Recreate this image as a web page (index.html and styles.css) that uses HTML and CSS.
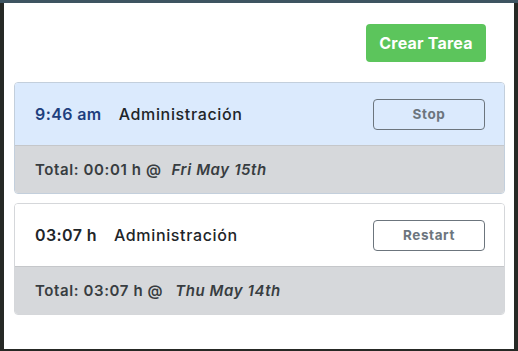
FILE: index.html
```html
<!DOCTYPE html>
<html lang="es">
<head>
<meta charset="utf-8">
<link rel="stylesheet" href="styles.css">
</head>
<body>
<div class="popup">
  <div class="toolbar">
    <button class="btn-create">Crear Tarea</button>
  </div>
  <div class="card card-active">
    <div class="card-head">
      <span class="time time-active">9:46 am</span>
      <span class="task">Administración</span>
      <button class="btn-outline">Stop</button>
    </div>
    <div class="card-foot">
      <span class="total">Total: 00:01 h @</span>
      <span class="date">Fri May 15th</span>
    </div>
  </div>
  <div class="card">
    <div class="card-head">
      <span class="time">03:07 h</span>
      <span class="task">Administración</span>
      <button class="btn-outline">Restart</button>
    </div>
    <div class="card-foot">
      <span class="total">Total: 03:07 h @</span>
      <span class="date date-2">Thu May 14th</span>
    </div>
  </div>
</div>
</body>
</html>
```
FILE: styles.css
```css
html, body {
  margin: 0;
  height: 100%;
}
body {
  background: linear-gradient(to bottom, #3e5461 0, #3e5461 3px, #262925 3px);
  padding: 3px 4px 2px 4px;
  box-sizing: border-box;
  font-family: Inter, "Noto Sans", sans-serif;
  color: #212529;
}
.popup {
  background: #fff;
  height: 100%;
  box-sizing: border-box;
  padding: 21px 9px 0 10px;
  display: flex;
  flex-direction: column;
  gap: 9px;
}
.toolbar {
  display: flex;
  justify-content: flex-end;
  padding-right: 19px;
  margin-bottom: 11px;
}
.btn-create {
  width: 120px;
  height: 38px;
  background: #5cc55c;
  border: none;
  border-radius: 4px;
  color: #fff;
  font-family: inherit;
  font-weight: 700;
  font-size: 16px;
  letter-spacing: 0.2px;
  padding: 0;
}
.card {
  border: 1px solid #d5d7da;
  border-radius: 4px;
  overflow: hidden;
}
.card-active {
  border-color: #c3cfdc;
}
.card-head {
  height: 62px;
  display: flex;
  align-items: center;
  padding: 0 19px 0 20px;
  background: #fff;
  border-bottom: 1px solid #c5c7ca;
}
.card-active .card-head {
  background: #dbeafd;
}
.time {
  font-weight: 600;
  font-size: 16px;
  letter-spacing: 0.4px;
  margin-right: 17px;
}
.time-active {
  color: #1e3f7e;
}
.task {
  font-weight: 500;
  font-size: 16px;
  letter-spacing: 0.65px;
  flex: 1;
}
.btn-outline {
  width: 112px;
  height: 31px;
  background: transparent;
  border: 1px solid #6c757d;
  border-radius: 4px;
  color: #6c757d;
  font-family: inherit;
  font-weight: 700;
  font-size: 13.5px;
  letter-spacing: 0.6px;
  padding: 0;
}
.card-foot {
  height: 47px;
  display: flex;
  align-items: center;
  padding: 0 20px;
  background: #d6d8db;
  color: #383d41;
  font-size: 15px;
  font-weight: 600;
  letter-spacing: 0.6px;
}
.date {
  font-style: italic;
  margin-left: 10px;
}
.date-2 {
  margin-left: 12px;
}
```
